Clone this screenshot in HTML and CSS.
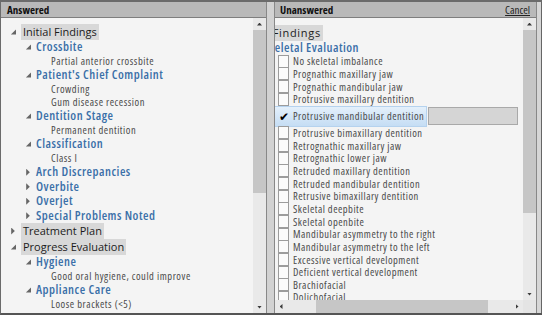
FILE: index.html
```html
<!DOCTYPE html>
<html lang="en">
<head>
    <meta charset="UTF-8">
    <title>Findings</title>
    <link rel="stylesheet" href="styles.css">
</head>
<body>
    <div class="window">
        <!-- answered questions -->
        <section class="pane pane-answered">
            <div class="pane-head"><span class="pane-title">Answered</span></div>
            <div class="pane-body">
                <div class="tree">
                    <div class="row top"><span class="exp open"></span><span class="top-label">Initial Findings</span></div>
                    <div class="row head"><span class="exp open"></span><span class="head-label">Crossbite</span></div>
                    <div class="row leaf">Partial anterior crossbite</div>
                    <div class="row head"><span class="exp open"></span><span class="head-label">Patient's Chief Complaint</span></div>
                    <div class="row leaf">Crowding</div>
                    <div class="row leaf short">Gum disease recession</div>
                    <div class="row head"><span class="exp open"></span><span class="head-label">Dentition Stage</span></div>
                    <div class="row leaf">Permanent dentition</div>
                    <div class="row head"><span class="exp open"></span><span class="head-label">Classification</span></div>
                    <div class="row leaf">Class I</div>
                    <div class="row head shut"><span class="exp closed"></span><span class="head-label">Arch Discrepancies</span></div>
                    <div class="row head shut"><span class="exp closed"></span><span class="head-label">Overbite</span></div>
                    <div class="row head shut"><span class="exp closed"></span><span class="head-label">Overjet</span></div>
                    <div class="row head shut"><span class="exp closed"></span><span class="head-label">Special Problems Noted</span></div>
                    <div class="row top"><span class="exp closed"></span><span class="top-label">Treatment Plan</span></div>
                    <div class="row top"><span class="exp open"></span><span class="top-label">Progress Evaluation</span></div>
                    <div class="row head"><span class="exp open"></span><span class="head-label">Hygiene</span></div>
                    <div class="row leaf">Good oral hygiene, could improve</div>
                    <div class="row head"><span class="exp open"></span><span class="head-label">Appliance Care</span></div>
                    <div class="row leaf">Loose brackets (&lt;5)</div>
                </div>
                <div class="vscroll">
                    <span class="arrow up"></span>
                    <span class="thumb thumb-left"></span>
                    <span class="track-rest"></span>
                    <span class="arrow down"></span>
                </div>
            </div>
        </section>

        <div class="splitter"></div>

        <!-- questions still to answer -->
        <section class="pane pane-unanswered">
            <div class="pane-head">
                <span class="pane-title">Unanswered</span>
                <a class="cancel" href="#">Cancel</a>
            </div>
            <div class="pane-body">
                <div class="viewport">
                    <div class="list">
                        <div class="row top root"><span class="top-label">Initial Findings</span></div>
                        <div class="row head"><span class="exp open"></span><span class="head-label">Skeletal Evaluation</span></div>
                        <label class="check-row"><span class="box"></span>No skeletal imbalance</label>
                        <label class="check-row"><span class="box"></span>Prognathic maxillary jaw</label>
                        <label class="check-row"><span class="box"></span>Prognathic mandibular jaw</label>
                        <label class="check-row"><span class="box"></span>Protrusive maxillary dentition</label>
                        <div class="check-row selected">
                            <span class="sel-item"><span class="box checked">&#10004;</span>Protrusive mandibular dentition</span>
                            <span class="note-field"></span>
                        </div>
                        <label class="check-row"><span class="box"></span>Protrusive bimaxillary dentition</label>
                        <label class="check-row"><span class="box"></span>Retrognathic maxillary jaw</label>
                        <label class="check-row"><span class="box"></span>Retrognathic lower jaw</label>
                        <label class="check-row"><span class="box"></span>Retruded maxillary dentition</label>
                        <label class="check-row"><span class="box"></span>Retruded mandibular dentition</label>
                        <label class="check-row"><span class="box"></span>Retrusive bimaxillary dentition</label>
                        <label class="check-row"><span class="box"></span>Skeletal deepbite</label>
                        <label class="check-row"><span class="box"></span>Skeletal openbite</label>
                        <label class="check-row"><span class="box"></span>Mandibular asymmetry to the right</label>
                        <label class="check-row"><span class="box"></span>Mandibular asymmetry to the left</label>
                        <label class="check-row"><span class="box"></span>Excessive vertical development</label>
                        <label class="check-row"><span class="box"></span>Deficient vertical development</label>
                        <label class="check-row"><span class="box"></span>Brachiofacial</label>
                        <label class="check-row"><span class="box"></span>Dolichofacial</label>
                        <label class="check-row"><span class="box"></span>Mesofacial</label>
                    </div>
                </div>
                <div class="vscroll">
                    <span class="arrow up"></span>
                    <span class="thumb thumb-right"></span>
                    <span class="track-rest"></span>
                    <span class="arrow down"></span>
                </div>
            </div>
            <div class="hbar">
                <div class="hscroll">
                    <span class="arrow left"></span>
                    <span class="hgap"></span>
                    <span class="hthumb"></span>
                    <span class="track-rest"></span>
                    <span class="arrow right"></span>
                </div>
                <div class="corner"></div>
            </div>
        </section>

        <div class="edge"></div>
    </div>
</body>
</html>
```

FILE: styles.css
```css
/* desktop dialog look, Segoe-ish text */
body {
    margin: 0;
    font-family: "Open Sans", "Noto Sans", sans-serif;
    background: #f4f4f4;
}

.window {
    display: flex;
    width: 541px;
    height: 311px;
    border-left: 1px solid #6b6b6b;
    border-top: 2px solid #6b6b6b;
    border-bottom: 2px solid #555;
    background: #f4f4f4;
    overflow: hidden;
}

.pane {
    display: flex;
    flex-direction: column;
    min-width: 0;
}

.pane-answered {
    width: 265px;
}

.pane-unanswered {
    flex: 1;
}

.pane-head {
    display: flex;
    align-items: center;
    height: 15px;
    padding: 0 6px;
    background: #b9b9b9;
    border-bottom: 1px solid #7e7e7e;
    font-size: 11px;
}

.pane-unanswered .pane-head {
    padding: 0 6px 0 5px;
}

.pane-title {
    font-weight: 700;
    color: #111;
    font-stretch: 87.5%;
}

.cancel {
    margin-left: auto;
    color: #222;
    text-decoration: underline;
    font-stretch: 87.5%;
}

.pane-body {
    flex: 1;
    display: flex;
    min-height: 0;
}

.splitter {
    width: 7px;
    background: #d2d2d2;
    border-left: 1px solid #888;
    border-right: 1px solid #888;
}

.edge {
    width: 4px;
    background: #d6d6d6;
    border-left: 1px solid #888;
    border-right: 1px solid #666;
}

/* tree rows */
.tree {
    flex: 1;
    padding-top: 6px;
    overflow: hidden;
}

.row {
    display: flex;
    align-items: center;
    height: 14px;
    line-height: 14px;
    white-space: nowrap;
}

.row.top {
    height: 16px;
    padding-left: 9px;
}

.row.head {
    padding-left: 24px;
}

.row.head.shut {
    height: 14.5px;
}

.row.leaf {
    padding-left: 50px;
    font-size: 10.5px;
    line-height: 13px;
    color: #4a4a4a;
    font-stretch: 75%;
    letter-spacing: 0.55px;
}

.row.leaf.short {
    height: 13px;
}

.exp {
    width: 6px;
    height: 7px;
    margin-right: 5px;
    flex: none;
}

.exp.open {
    background: #666;
    clip-path: polygon(100% 15%, 100% 85%, 15% 85%);
}

.exp.closed {
    background: #666;
    clip-path: polygon(20% 0, 80% 50%, 20% 100%);
}

.top-label {
    display: inline-block;
    height: 16px;
    line-height: 16px;
    padding: 0 2px;
    background: #d8d8d8;
    font-size: 11px;
    color: #1b1b1b;
}

.head-label {
    font-size: 12.5px;
    font-weight: 600;
    color: #3a6fa8;
    font-stretch: 75%;
    letter-spacing: 0.5px;
}

/* scrollbars */
.vscroll {
    display: flex;
    flex-direction: column;
    width: 13px;
    flex: none;
    background: #e9e9e9;
}

.arrow {
    display: flex;
    align-items: center;
    justify-content: center;
    flex: none;
    height: 12px;
}

.arrow::before {
    content: "";
    width: 5px;
    height: 3px;
    background: #3c3c3c;
}

.arrow.up::before {
    clip-path: polygon(50% 0, 100% 100%, 0 100%);
}

.arrow.down::before {
    clip-path: polygon(0 0, 100% 0, 50% 100%);
}

.arrow.left,
.arrow.right {
    width: 12px;
    height: 13px;
}

.arrow.left::before {
    width: 3px;
    height: 5px;
    clip-path: polygon(100% 0, 100% 100%, 0 50%);
}

.arrow.right::before {
    width: 3px;
    height: 5px;
    clip-path: polygon(0 0, 100% 50%, 0 100%);
}

.thumb {
    flex: none;
    background: #c6c6c6;
}

.thumb-left {
    height: 163px;
}

.thumb-right {
    height: 183px;
}

.track-rest {
    flex: 1;
}

/* unanswered list, scrolled sideways */
.viewport {
    flex: 1;
    overflow: hidden;
    padding-top: 7px;
}

.list {
    margin-left: -50px;
}

.row.root {
    padding-left: 9px;
}

.row.root .top-label {
    letter-spacing: 0.7px;
}

.list .row.head {
    padding-left: 27px;
}

.check-row {
    display: flex;
    align-items: center;
    height: 12.67px;
    line-height: 12px;
    padding-left: 53px;
    white-space: nowrap;
    font-size: 10.5px;
    color: #4a4a4a;
    font-stretch: 75%;
    letter-spacing: 0.5px;
}

.box {
    width: 9px;
    height: 11px;
    margin-right: 4px;
    flex: none;
    background: #fbfbfb;
    border: 1px solid #9c9c9c;
}

.check-row.selected {
    height: 21px;
    padding-left: 50px;
}

.sel-item {
    display: flex;
    align-items: center;
    height: 19px;
    padding-left: 3px;
    padding-right: 2px;
    background: linear-gradient(#e4f0fb, #c5ddf4);
    border: 1px solid #b5d2ee;
    border-left: none;
}

.box.checked {
    border-color: transparent;
    background: transparent;
    color: #000;
    font-size: 12px;
    line-height: 11px;
    text-align: center;
    letter-spacing: 0;
}

.note-field {
    width: 88px;
    height: 16px;
    margin-left: 1px;
    background: #d5d5d5;
    border: 1px solid #a9a9a9;
}

.hbar {
    display: flex;
    height: 13px;
    flex: none;
}

.hscroll {
    flex: 1;
    display: flex;
    background: #e9e9e9;
}

.hgap {
    width: 29px;
    flex: none;
}

.hthumb {
    width: 172px;
    flex: none;
    background: #c6c6c6;
}

.corner {
    width: 13px;
    background: #e4e4e4;
}
```
